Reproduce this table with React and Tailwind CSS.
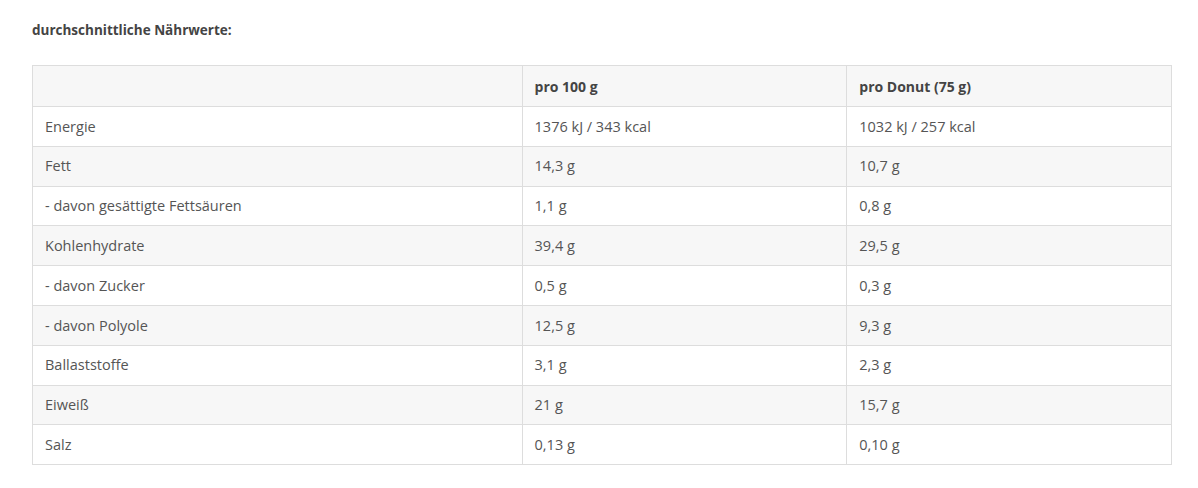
const rows = [
  ["Energie", "1376 kJ / 343 kcal", "1032 kJ / 257 kcal"],
  ["Fett", "14,3 g", "10,7 g"],
  ["- davon gesättigte Fettsäuren", "1,1 g", "0,8 g"],
  ["Kohlenhydrate", "39,4 g", "29,5 g"],
  ["- davon Zucker", "0,5 g", "0,3 g"],
  ["- davon Polyole", "12,5 g", "9,3 g"],
  ["Ballaststoffe", "3,1 g", "2,3 g"],
  ["Eiweiß", "21 g", "15,7 g"],
  ["Salz", "0,13 g", "0,10 g"],
];

export default function App() {
  return (
    <div className="bg-white w-[1198px] h-[488px] pl-[32px] pr-[26px] pt-[20px] text-[14.5px] text-[#555]" style={{ fontFamily: '"Open Sans", "Liberation Sans", sans-serif' }}>
      <div className="font-bold text-[13.5px] text-[#444] leading-[20px]">durchschnittliche Nährwerte:</div>
      <table className="mt-[25px] w-[1140px] border-collapse border border-[#ddd]">
        <colgroup>
          <col className="w-[490px]" />
          <col className="w-[325px]" />
          <col className="w-[325px]" />
        </colgroup>
        <thead>
          <tr className="bg-[#f7f7f7] h-[41px]">
            <th className="border border-[#ddd] px-3 text-left font-bold text-[14px] text-[#444]"></th>
            <th className="border border-[#ddd] px-3 text-left font-bold text-[14px] text-[#444]">pro 100 g</th>
            <th className="border border-[#ddd] px-3 text-left font-bold text-[14px] text-[#444]">pro Donut (75 g)</th>
          </tr>
        </thead>
        <tbody>
          {rows.map((r, i) => (
            <tr key={i} className={i % 2 === 1 ? "bg-[#f7f7f7] h-[39.8px]" : "bg-white h-[39.8px]"}>
              <td className="border border-[#ddd] px-3 py-0">{r[0]}</td>
              <td className="border border-[#ddd] px-3 py-0">{r[1]}</td>
              <td className="border border-[#ddd] px-3 py-0">{r[2]}</td>
            </tr>
          ))}
        </tbody>
      </table>
    </div>
  );
}
